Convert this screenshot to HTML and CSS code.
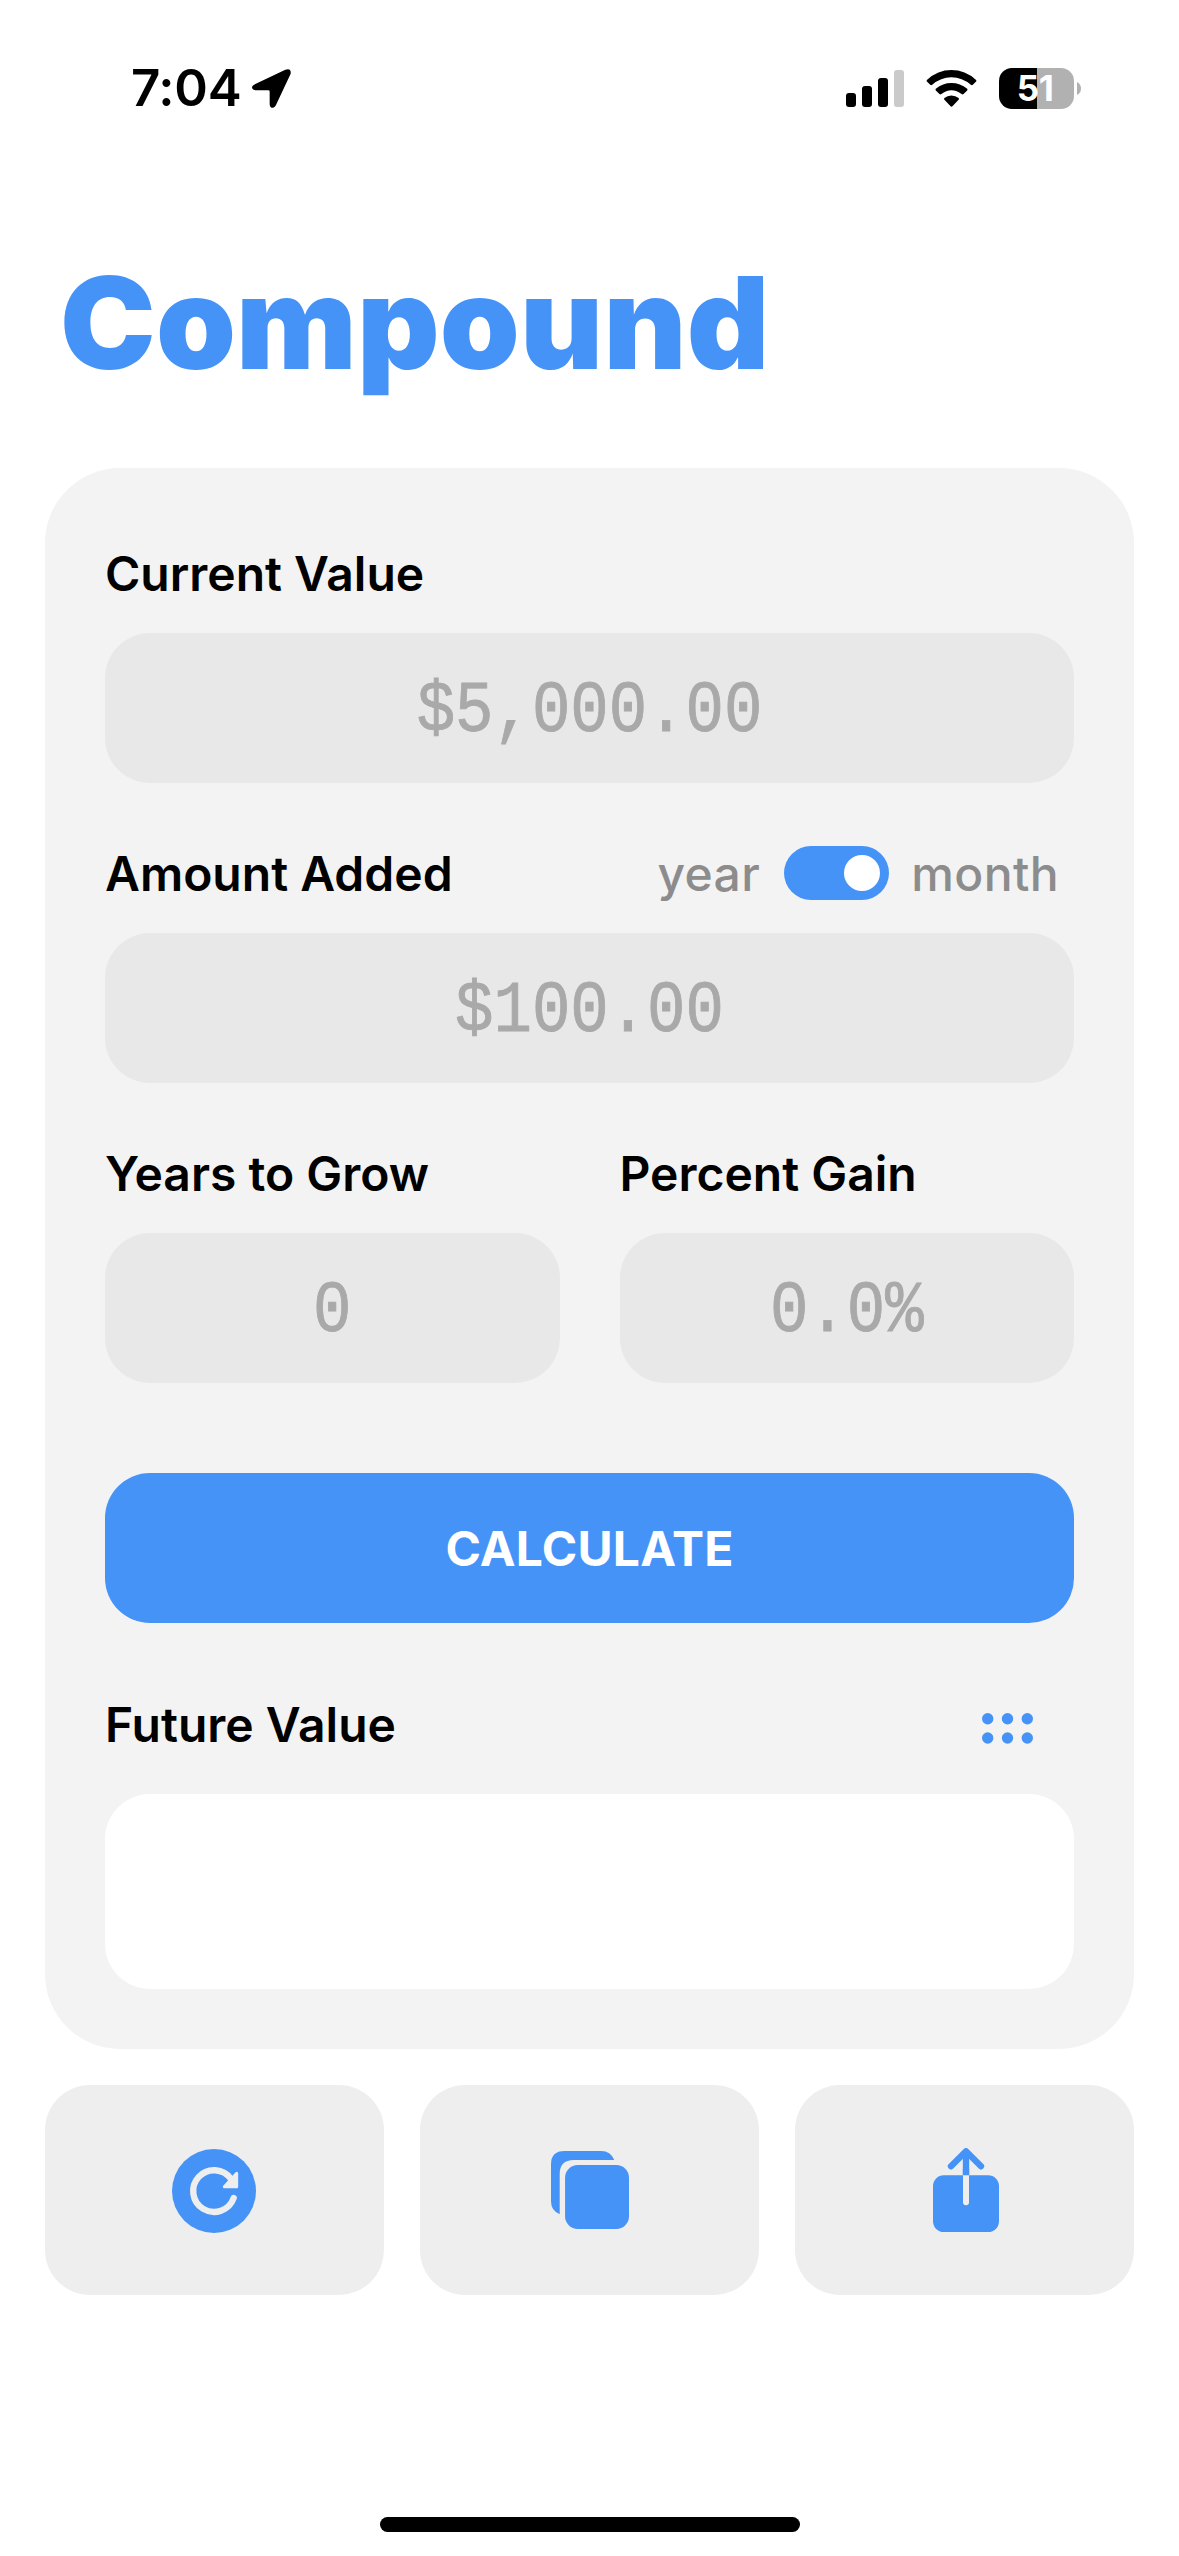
FILE: index.html
```html
<!DOCTYPE html>
<html lang="en">
<head>
<meta charset="utf-8">
<title>Compound</title>
<link rel="stylesheet" href="styles.css">
</head>
<body>
<div class="screen">
  <header class="status">
    <div class="status-left">
      <span class="clock">7:04</span>
      <svg class="location" viewBox="0 0 117 117"><path d="M10 45 L100 2 Q118-4 116 14 L73 106 Q68 118 60 116 Q53 115 53 104 L53 68 Q53 64 49 64 L10 64 Q0 62 0 54 Q1 49 10 45Z"/></svg>
    </div>
    <div class="status-right">
      <svg class="signal" viewBox="0 0 58 37"><rect y="23" width="10" height="14" rx="3"/><rect x="16" y="16" width="10" height="21" rx="3"/><rect x="32" y="8" width="10" height="29" rx="3"/><rect class="faint" x="48" width="10" height="37" rx="3"/></svg>
      <svg class="wifi" viewBox="318 86 153 112"><path d="M320 116 Q353 86 394 86 Q436 86 469 116 Q471 119 469 121 L459 131 Q456 134 453 131 Q427 108 394 108 Q362 108 336 131 Q333 134 330 131 L320 121 Q318 119 320 116Z"/><path d="M347 143 Q368 125 394 125 Q421 125 442 143 Q444 146 442 148 L431 159 Q428 161 425 159 Q411 147 394 147 Q378 147 364 159 Q361 161 358 159 L347 148 Q345 146 347 143Z"/><path d="M373 171 Q382 163 394 163 Q407 163 416 171 Q418 174 416 176 L398 195 Q394 199 391 195 L373 176 Q371 174 373 171Z"/></svg>
      <div class="battery"><div class="battery-body">51</div><svg class="battery-tip" viewBox="0 0 4 13"><path d="M0 0Q4 2 4 6.500T0 13Z"/></svg></div>
    </div>
  </header>

  <h1 class="title">Compound</h1>

  <main class="panel">
    <section class="field">
      <div class="label-row"><span class="label">Current Value</span></div>
      <div class="input"><span class="placeholder">$5,000.00</span></div>
    </section>
    <section class="field">
      <div class="label-row">
        <span class="label">Amount Added</span>
        <div class="period"><span class="year">year</span><div class="toggle"><div class="knob"></div></div><span class="month">month</span></div>
      </div>
      <div class="input"><span class="placeholder">$100.00</span></div>
    </section>
    <div class="pair">
      <section class="field">
        <div class="label-row"><span class="label">Years to Grow</span></div>
        <div class="input"><span class="placeholder">0</span></div>
      </section>
      <section class="field">
        <div class="label-row"><span class="label">Percent Gain</span></div>
        <div class="input"><span class="placeholder">0.0%</span></div>
      </section>
    </div>
    <div class="calculate">CALCULATE</div>
    <div class="label-row result-head">
      <span class="label">Future Value</span>
      <svg class="dots" viewBox="0 0 51 31"><circle cx="5.700" cy="5.700" r="5.700"/><circle cx="25.500" cy="5.700" r="5.700"/><circle cx="45.300" cy="5.700" r="5.700"/><circle cx="5.700" cy="25" r="5.700"/><circle cx="25.500" cy="25" r="5.700"/><circle cx="45.300" cy="25" r="5.700"/></svg>
    </div>
    <div class="result"></div>
  </main>

  <nav class="actions">
    <div class="action">
      <svg class="refresh" width="84" height="84" viewBox="426 236 252 252"><circle class="blue" cx="552" cy="362" r="126"/><path class="ring" d="M611 383 A62.500 62.500 0 1 1 603 326"/><path class="head" d="M620 309 L620 349 L583 349Z"/></svg>
    </div>
    <div class="action">
      <svg class="copy" width="78" height="78" viewBox="214 150 233 233"><rect class="blue" x="256" y="192" width="191" height="191" rx="38"/><path class="blue" d="M240 339 Q214 328 214 301 V190 Q214 150 254 150 H364 Q392 150 403 177 H282 Q240 177 240 219Z"/></svg>
    </div>
    <div class="action">
      <svg class="share" width="66" height="84" viewBox="219 143 198 252"><rect class="blue" x="219" y="225" width="198" height="170" rx="32"/><path class="arrow" d="M273 198 L318 153 L363 198 M318 156 V220"/><rect class="blue" x="308.500" y="205" width="19" height="20"/><path class="stem" d="M309 225 H327 V306 A9 9 0 0 1 309 306Z"/></svg>
    </div>
  </nav>

  <div class="home"></div>
</div>
</body>
</html>
```
FILE: styles.css
```css
* { box-sizing: border-box; }
body { margin: 0; background: #fff; color: #000; font-family: Inter, "Liberation Sans", sans-serif; }
svg { display: block; flex: none; }
.screen { width: 1179px; height: 2556px; display: flex; flex-direction: column; padding: 0 45px; }
.status { height: 176px; display: flex; justify-content: space-between; align-items: center; padding: 0 53px 0 86px; }
.status-left, .status-right, .battery { display: flex; align-items: center; }
.status-left { gap: 13px; }
.clock { font-size: 51px; font-weight: 600; line-height: 60px; width: 108px; white-space: nowrap; letter-spacing: -0.3px; }
.location { width: 39px; height: 39px; }
.signal { width: 58px; height: 37px; margin-right: 22px; }
.faint { fill: #cacaca; }
.wifi { width: 51px; height: 37px; margin-right: 22px; }
.battery { gap: 3px; }
.battery-body { width: 75px; height: 41px; border-radius: 13px; background: linear-gradient(90deg, #000 38px, #b1b1b1 38px); color: #fff; font-size: 35px; line-height: 41px; font-weight: 700; text-align: center; padding-right: 3px; letter-spacing: -0.5px; }
.battery-tip { width: 4px; height: 13px; fill: #b1b1b1; }
.title { margin: 0 0 0 15px; height: 292px; padding-top: 1px; font-size: 128px; line-height: 292px; font-weight: 900; color: #4693f8; letter-spacing: 0.2px; }
.panel { background: #f3f3f3; border-radius: 75px; padding: 75px 60px 60px; display: flex; flex-direction: column; height: 1581px; }
.field { margin-bottom: 60px; }
.label-row { height: 60px; display: flex; align-items: center; justify-content: space-between; margin-bottom: 30px; }
.label { font-size: 48px; line-height: 60px; font-weight: 600; white-space: nowrap; padding-top: 1px; }
.period { display: flex; align-items: center; font-size: 48px; font-weight: 450; letter-spacing: 0.4px; color: #8c8c8c; padding-right: 15px; }
.toggle { width: 105px; height: 54px; border-radius: 27px; background: #4693f8; padding: 9px; display: flex; justify-content: flex-end; margin: 0 22px 0 24px; }
.knob { width: 36px; height: 36px; border-radius: 50%; background: #fff; }
.input { height: 150px; border-radius: 45px; background: #e8e8e8; display: flex; align-items: center; justify-content: center; padding-top: 7px; }
.placeholder { font-family: "Liberation Mono", monospace; font-size: 64px; line-height: 80px; color: #a9a9a9; -webkit-text-stroke: 0.8px #a9a9a9; transform: scaleY(1.120); }
.pair { display: grid; grid-template-columns: 1fr 1fr; column-gap: 60px; }
.pair .field { margin-bottom: 90px; }
.calculate { height: 150px; padding-top: 1px; border-radius: 45px; background: #4693f8; color: #fff; font-size: 48px; line-height: 150px; font-weight: 700; text-align: center; letter-spacing: 0.2px; }
.result-head { margin: 73px 0 38px; padding-right: 41px; }
.result-head .label { padding: 0 0 2px; }
.dots { width: 51px; height: 31px; fill: #4693f8; margin-top: 4px; }
.result { height: 195px; border-radius: 45px; background: #fff; }
.actions { display: grid; grid-template-columns: repeat(3, 1fr); column-gap: 36px; margin-top: 36px; }
.action { height: 210px; border-radius: 45px; background: #eee; display: flex; align-items: center; justify-content: center; }
.refresh { margin: 2px 2px 0 0; }
.share { margin-left: 2px; }
.blue { fill: #4693f8; }
.ring { fill: none; stroke: #eee; stroke-width: 19; stroke-linecap: round; }
.head { fill: #eee; stroke: #eee; stroke-width: 9; stroke-linejoin: round; }
.arrow { fill: none; stroke: #4693f8; stroke-width: 19; stroke-linecap: round; stroke-linejoin: round; }
.stem { fill: #eee; }
.home { width: 420px; height: 15px; border-radius: 8px; background: #000; margin: auto auto 24px; }
```
